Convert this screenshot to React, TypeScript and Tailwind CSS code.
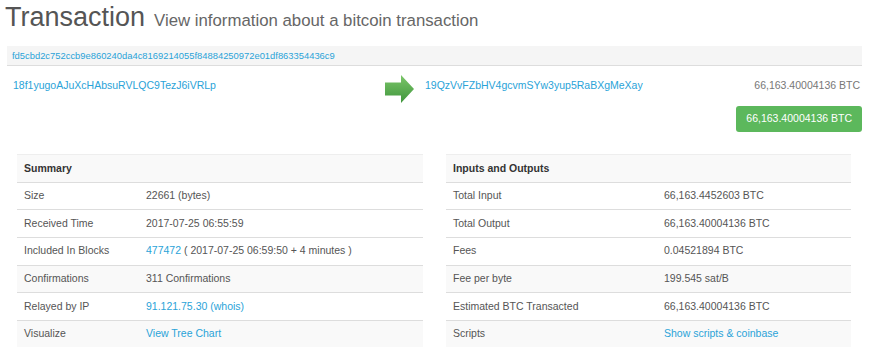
const font = { fontFamily: '"Liberation Sans", Arial, sans-serif' };

type Row = { label: string; value: React.ReactNode; striped?: boolean };

const link = "text-[#2aa3d8]";

const summary: Row[] = [
  { label: "Size", value: "22661 (bytes)" },
  { label: "Received Time", value: "2017-07-25 06:55:59" },
  {
    label: "Included In Blocks",
    value: (
      <>
        <span className={link}>477472</span> ( 2017-07-25 06:59:50 + 4 minutes )
      </>
    ),
  },
  { label: "Confirmations", value: "311 Confirmations", striped: true },
  { label: "Relayed by IP", value: <span className={link}>91.121.75.30 (whois)</span> },
  { label: "Visualize", value: <span className={link}>View Tree Chart</span>, striped: true },
];

const io: Row[] = [
  { label: "Total Input", value: "66,163.4452603 BTC" },
  { label: "Total Output", value: "66,163.40004136 BTC" },
  { label: "Fees", value: "0.04521894 BTC" },
  { label: "Fee per byte", value: "199.545 sat/B", striped: true },
  { label: "Estimated BTC Transacted", value: "66,163.40004136 BTC" },
  { label: "Scripts", value: <span className={link}>Show scripts &amp; coinbase</span>, striped: true },
];

function Arrow() {
  return (
    <svg width="29" height="28" viewBox="0 0 29 28" className="shrink-0">
      <defs>
        <linearGradient id="g" x1="0" y1="0" x2="0" y2="1">
          <stop offset="0" stopColor="#7cc66a" />
          <stop offset="1" stopColor="#3f953c" />
        </linearGradient>
      </defs>
      <path d="M0 7.5 H16 V0 L29 14 L16 28 V20.5 H0 Z" fill="url(#g)" />
    </svg>
  );
}

function InfoTable({ title, rows, labelWidth }: { title: string; rows: Row[]; labelWidth: string }) {
  return (
    <div className="text-[10.5px] text-[#555]">
      <div className="h-[27.6px] flex items-center px-[7px] bg-[#f9f9f9] border-t border-[#eee] font-bold text-[#333]">
        {title}
      </div>
      {rows.map((r) => (
        <div
          key={r.label}
          className={`h-[27.6px] flex items-center px-[7px] border-t border-[#ddd] ${r.striped ? "bg-[#f9f9f9]" : "bg-white"}`}
        >
          <div className={`${labelWidth} shrink-0`}>{r.label}</div>
          <div>{r.value}</div>
        </div>
      ))}
    </div>
  );
}

export default function App() {
  return (
    <div className="w-[873px] h-[360px] bg-white overflow-hidden" style={font}>
      <div className="pt-[2px] pl-[5px] flex items-baseline gap-[9px] text-[#555]">
        <h1 className="text-[27px] leading-[31px]">Transaction</h1>
        <span className="text-[16.8px] text-[#666]">View information about a bitcoin transaction</span>
      </div>

      <div className="mt-[13px] mx-[7px] w-[855px]">
        <div className="h-[20px] flex items-center px-[5px] bg-[#f5f5f5] border-b border-[#ddd]">
          <span className={`text-[9.4px] ${link}`}>fd5cbd2c752ccb9e860240da4c8169214055f84884250972e01df863354436c9</span>
        </div>
        <div className="h-[40px] flex items-center text-[10.5px]">
          <div className={`w-[378px] pl-[6px] ${link}`}>18f1yugoAJuXcHAbsuRVLQC9TezJ6iVRLp</div>
          <div className="mt-[5px]">
            <Arrow />
          </div>
          <div className={`flex-1 pl-[11px] ${link}`}>19QzVvFZbHV4gcvmSYw3yup5RaBXgMeXay</div>
          <div className="pr-[2px] text-[#777]">66,163.40004136 BTC</div>
        </div>
        <div className="flex justify-end">
          <div className="h-[26px] px-[10px] flex items-center rounded-[3px] bg-[#5cb85c] text-white text-[10.5px]">
            66,163.40004136 BTC
          </div>
        </div>
      </div>

      <div className="mt-[22px] ml-[17px] grid grid-cols-[406px_405px] gap-x-[23px]">
        <InfoTable title="Summary" rows={summary} labelWidth="w-[122px]" />
        <InfoTable title="Inputs and Outputs" rows={io} labelWidth="w-[211px]" />
      </div>
    </div>
  );
}
